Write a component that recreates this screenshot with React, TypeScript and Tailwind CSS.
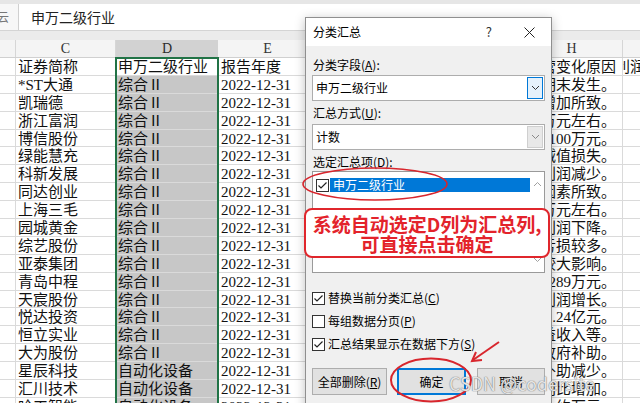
import React from 'react';

type Row = { c: string; d: string; e: string; h: string; i?: string };

const rows: Row[] = [
  { c: '证券简称', d: '申万二级行业', e: '报告年度', h: '经营变化原因', i: '利润' },
  { c: '*ST大通', d: '综合Ⅱ', e: '2022-12-31', h: '期末发生。' },
  { c: '凯瑞德', d: '综合Ⅱ', e: '2022-12-31', h: '增加所致。' },
  { c: '浙江富润', d: '综合Ⅱ', e: '2022-12-31', h: '万元左右。' },
  { c: '博信股份', d: '综合Ⅱ', e: '2022-12-31', h: '约100万元。' },
  { c: '绿能慧充', d: '综合Ⅱ', e: '2022-12-31', h: '减值损失。' },
  { c: '科新发展', d: '综合Ⅱ', e: '2022-12-31', h: '利润减少。' },
  { c: '同达创业', d: '综合Ⅱ', e: '2022-12-31', h: '因素所致。' },
  { c: '上海三毛', d: '综合Ⅱ', e: '2022-12-31', h: '万元左右。' },
  { c: '园城黄金', d: '综合Ⅱ', e: '2022-12-31', h: '利润下降。' },
  { c: '综艺股份', d: '综合Ⅱ', e: '2022-12-31', h: '亏损较多。' },
  { c: '亚泰集团', d: '综合Ⅱ', e: '2022-12-31', h: '较大影响。' },
  { c: '青岛中程', d: '综合Ⅱ', e: '2022-12-31', h: '约289万元。' },
  { c: '天宸股份', d: '综合Ⅱ', e: '2022-12-31', h: '利润增长。' },
  { c: '悦达投资', d: '综合Ⅱ', e: '2022-12-31', h: '约1.24亿元。' },
  { c: '恒立实业', d: '综合Ⅱ', e: '2022-12-31', h: '益收入等。' },
  { c: '大为股份', d: '综合Ⅱ', e: '2022-12-31', h: '政府补助。' },
  { c: '星辰科技', d: '自动化设备', e: '2022-12-31', h: '补助减少。' },
  { c: '汇川技术', d: '自动化设备', e: '2022-12-31', h: '同比增加。' },
  { c: '哈工智能', d: '自动化设备', e: '2022-12-31', h: '约万元。' },
];

function SheetRow({ row, first }: { row: Row; first: boolean }) {
  return (
    <div className="flex h-[17.9px] shrink-0 border-b border-[#dadada] text-[15px] leading-[18px] text-[#111]">
      <div className="w-[16px] shrink-0 border-r border-[#dadada]" />
      <div className="w-[100px] shrink-0 overflow-hidden whitespace-nowrap border-r border-[#dadada] pl-[2px]">
        {row.c}
      </div>
      <div
        className={
          first
            ? 'w-[102px] shrink-0 overflow-hidden whitespace-nowrap bg-white pl-[2px]'
            : 'w-[102px] shrink-0 overflow-hidden whitespace-nowrap bg-[#c7c7c7] pl-[2px]'
        }
      >
        {row.d}
      </div>
      <div className="w-[100px] shrink-0 overflow-hidden whitespace-nowrap border-r border-[#dadada] pl-[3px]">
        {row.e}
      </div>
      <div className="w-[102px] shrink-0 border-r border-[#dadada]" />
      <div className="w-[101px] shrink-0 border-r border-[#dadada]" />
      <div className="flex w-[102px] shrink-0 justify-end overflow-hidden whitespace-nowrap border-r border-[#dadada] pr-[6px]">
        {row.h}
      </div>
      <div className="flex-1 overflow-hidden whitespace-nowrap">
        {row.i ? <span className="-ml-[8px]">{row.i}</span> : null}
      </div>
    </div>
  );
}

function Chevron({ color = '#333' }: { color?: string }) {
  return (
    <svg width="9" height="6" viewBox="0 0 9 6">
      <path d="M1 1 L4.5 4.5 L8 1" fill="none" stroke={color} strokeWidth="1" />
    </svg>
  );
}

function ChevronUp({ color = '#a0a0a0' }: { color?: string }) {
  return (
    <svg width="9" height="6" viewBox="0 0 9 6">
      <path d="M1 5 L4.5 1.5 L8 5" fill="none" stroke={color} strokeWidth="1" />
    </svg>
  );
}

function CheckBox({ checked }: { checked: boolean }) {
  return (
    <svg width="13" height="13" viewBox="0 0 13 13" className="shrink-0">
      <rect x="0.5" y="0.5" width="12" height="12" fill="#fff" stroke="#333" />
      {checked ? (
        <path d="M2.5 6.5 L5 9 L10.5 3.5" fill="none" stroke="#222" strokeWidth="1.2" />
      ) : null}
    </svg>
  );
}

function Option({ checked, label, keyChar }: { checked: boolean; label: string; keyChar: string }) {
  return (
    <div className="flex h-[16px] items-center gap-[3px]">
      <CheckBox checked={checked} />
      <span className="whitespace-nowrap">
        {label}(<span className="underline">{keyChar}</span>)
      </span>
    </div>
  );
}

function SubtotalDialog() {
  return (
    <div className="absolute left-[305px] top-[17px] h-[400px] w-[247px] border border-[#8f8f8f] bg-[#f0f0f0] font-['Noto_Sans_CJK_SC',sans-serif] text-[12px] leading-[16px] text-black shadow-[0_2px_10px_rgba(0,0,0,0.25)]">
      <div className="flex h-[28px] items-center bg-white pl-[7px]">
        <span className="flex-1">分类汇总</span>
        <span className="mr-[32px] text-[13px] text-[#333]">?</span>
        <svg width="11" height="11" viewBox="0 0 11 11" className="mr-[16px]">
          <path d="M0.5 0.5 L10.5 10.5 M10.5 0.5 L0.5 10.5" stroke="#222" strokeWidth="1" />
        </svg>
      </div>

      <div className="flex flex-col px-[6px] pt-[11px]">
        <div className="pl-[1px]">
          分类字段(<span className="underline">A</span>):
        </div>
        <div className="mt-[2px] flex h-[26px] items-center border border-[#adadad] bg-white">
          <span className="flex-1 pl-[3px]">申万二级行业</span>
          <div className="mr-[1px] flex h-[22px] w-[16px] items-center justify-center border border-[#0078d7] bg-[#e5f1fb]">
            <Chevron />
          </div>
        </div>

        <div className="mt-[4px] pl-[1px]">
          汇总方式(<span className="underline">U</span>):
        </div>
        <div className="mt-[3px] flex h-[26px] items-center border border-[#adadad] bg-white">
          <span className="flex-1 pl-[3px]">计数</span>
          <div className="mr-[1px] flex h-[22px] w-[16px] items-center justify-center border border-[#cfcfcf] bg-[#e8e8e8]">
            <Chevron color="#888" />
          </div>
        </div>

        <div className="mt-[4px] pl-[1px]">选定汇总项(D):</div>
        <div className="mt-[1px] flex h-[102px] border border-[#9a9a9a] bg-white">
          <div className="flex-1 pl-[3px] pt-[6px]">
            <div className="flex h-[14px] items-center gap-[1px]">
              <CheckBox checked />
              <div className="flex h-[14px] w-[200px] items-center bg-[#0078d7] pl-[3px] text-white">
                申万二级行业
              </div>
            </div>
          </div>
          <div className="flex w-[16px] flex-col items-center justify-between py-[9px]">
            <ChevronUp />
            <Chevron color="#a0a0a0" />
          </div>
        </div>

        <div className="mt-[17px] flex flex-col gap-[7px]">
          <Option checked label="替换当前分类汇总" keyChar="C" />
          <Option checked={false} label="每组数据分页" keyChar="P" />
          <Option checked label="汇总结果显示在数据下方" keyChar="S" />
        </div>

        <div className="mt-[16px] flex">
          <div className="flex h-[27px] w-[75px] items-center justify-center border border-[#adadad] bg-[#e1e1e1]">
            全部删除(<span className="underline">R</span>)
          </div>
          <div className="ml-[10px] flex h-[27px] w-[69px] items-center justify-center border-2 border-[#0078d7] bg-[#e1e1e1]">
            确定
          </div>
          <div className="ml-[11px] flex h-[27px] w-[68px] items-center justify-center border border-[#adadad] bg-[#e1e1e1]">
            取消
          </div>
        </div>
      </div>
    </div>
  );
}

export default function App() {
  return (
    <div className="relative h-[403px] w-[640px] overflow-hidden bg-white font-['Liberation_Serif','Noto_Sans_CJK_SC',serif]">
      <div className="h-[4px] bg-[#e6e6e6]" />
      <div className="flex h-[27px] border-b border-[#d4d4d4] bg-white">
        <div className="flex w-[19px] items-center overflow-hidden border-r border-[#d0d0d0] bg-[#f7f7f7]">
          <span className="-ml-[3px] font-['Noto_Sans_CJK_SC',sans-serif] text-[12px] text-[#777]">云</span>
        </div>
        <div className="flex flex-1 items-center pl-[12px] font-['Noto_Sans_CJK_SC',sans-serif] text-[14px] text-[#222]">
          申万二级行业
        </div>
      </div>
      <div className="h-[9px] bg-[#ebebeb]" />
      <div className="flex h-[18px] border-b border-[#d0d0d0] bg-[#f4f4f4] text-[14px] leading-[18px] text-[#333]">
        <div className="w-[16px] shrink-0 border-r border-[#d6d6d6]" />
        <div className="w-[100px] shrink-0 border-r border-[#d6d6d6] text-center">C</div>
        <div className="w-[102px] shrink-0 bg-[#d2d2d2] text-center text-[#2b2b2b]">D</div>
        <div className="w-[100px] shrink-0 border-r border-[#d6d6d6] text-center">E</div>
        <div className="w-[102px] shrink-0 border-r border-[#d6d6d6] text-center">F</div>
        <div className="w-[101px] shrink-0 border-r border-[#d6d6d6] text-center">G</div>
        <div className="w-[102px] shrink-0 border-r border-[#d6d6d6] text-center">H</div>
        <div className="flex-1" />
      </div>
      <div className="flex flex-col">
        {rows.map((row, idx) => (
          <SheetRow key={idx} row={row} first={idx === 0} />
        ))}
      </div>

      <div className="pointer-events-none absolute left-[115px] top-[57px] h-[360px] w-[104px] border-2 border-[#217346]" />

      <SubtotalDialog />

      <div className="absolute left-[304px] top-[208px] h-[50px] w-[246px] rounded-[8px] border-2 border-[#e0262c] bg-white pt-[4px] text-center font-['Noto_Sans_CJK_SC',sans-serif] text-[19px] font-bold leading-[20px] text-[#e3232b]">
        <div className="whitespace-nowrap">系统自动选定D列为汇总列,</div>
        <div className="whitespace-nowrap">可直接点击确定</div>
      </div>

      <svg className="pointer-events-none absolute inset-0" width="640" height="403" viewBox="0 0 640 403">
        <ellipse cx="375" cy="184" rx="72" ry="16" fill="none" stroke="#d8262d" strokeWidth="1.6" />
        <ellipse cx="431" cy="380" rx="40" ry="21.5" fill="none" stroke="#d8262d" strokeWidth="2" />
        <path d="M499 342 L473 360" stroke="#d8262d" strokeWidth="2" fill="none" />
        <polyline points="476,352 472,361 482,360" stroke="#d8262d" strokeWidth="2" fill="none" />
      </svg>

      <div className="pointer-events-none absolute left-[449px] top-[372px] whitespace-nowrap font-['Noto_Sans_CJK_SC',sans-serif] text-[18px] leading-[22px] text-white/80 [text-shadow:0_0_1px_#777,0_0_1px_#777]">
        CSDN @codersite
      </div>
    </div>
  );
}
